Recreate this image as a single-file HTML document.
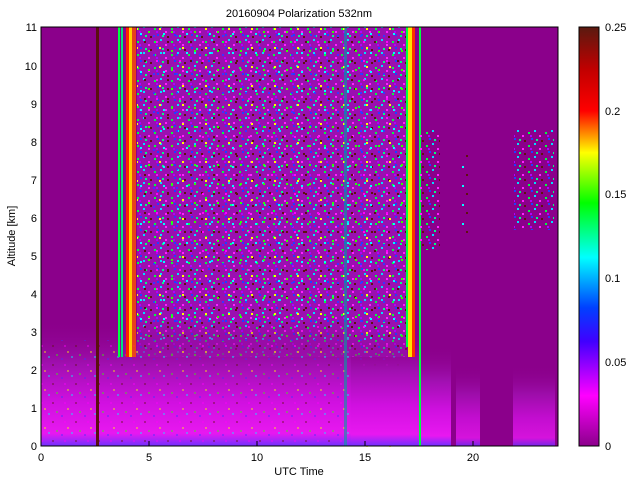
<!DOCTYPE html>
<html><head><style>
html,body{margin:0;padding:0;background:#fff;width:640px;height:480px;overflow:hidden}
svg{display:block}
text{font-family:"Liberation Sans",sans-serif;font-size:11px;fill:#000}
</style></head><body>
<svg width="640" height="480" xmlns="http://www.w3.org/2000/svg">
<defs>
<linearGradient id="cb" x1="0" y1="1" x2="0" y2="0">
<stop offset="0" stop-color="#8b008b"/>
<stop offset="0.12" stop-color="#ff00ff"/>
<stop offset="0.25" stop-color="#4000ff"/>
<stop offset="0.33" stop-color="#0040ff"/>
<stop offset="0.45" stop-color="#00ffff"/>
<stop offset="0.58" stop-color="#00ff00"/>
<stop offset="0.7" stop-color="#ffff00"/>
<stop offset="0.8" stop-color="#ff0000"/>
<stop offset="0.9" stop-color="#c00000"/>
<stop offset="1" stop-color="#5a1a10"/>
</linearGradient>
<linearGradient id="low" x1="0" y1="0" x2="0" y2="1">
<stop offset="0" stop-color="#8b008b" stop-opacity="0"/>
<stop offset="0.35" stop-color="#a010b0"/>
<stop offset="0.65" stop-color="#d010e0"/>
<stop offset="0.9" stop-color="#e818f0"/>
<stop offset="1" stop-color="#7030ff"/>
</linearGradient>
<pattern id="p1" width="17" height="13" patternUnits="userSpaceOnUse">
<rect x="1" y="2" width="2" height="2" fill="#00ff40"/>
<rect x="7" y="0" width="2" height="2" fill="#00e0ff"/>
<rect x="12" y="5" width="2" height="2" fill="#ff20ff"/>
<rect x="4" y="8" width="2" height="2" fill="#2040ff"/>
<rect x="14" y="10" width="2" height="2" fill="#601010"/>
<rect x="9" y="9" width="2" height="2" fill="#00ff80"/>
<rect x="3" y="5" width="2" height="2" fill="#b000ff"/>
</pattern>
<pattern id="p2" width="23" height="19" patternUnits="userSpaceOnUse">
<rect x="2" y="14" width="2" height="2" fill="#00ffff"/>
<rect x="18" y="3" width="2" height="2" fill="#ff00ff"/>
<rect x="10" y="12" width="2" height="2" fill="#30ff00"/>
<rect x="6" y="3" width="2" height="2" fill="#601010"/>
<rect x="15" y="16" width="2" height="2" fill="#4030ff"/>
<rect x="21" y="9" width="2" height="2" fill="#ffff00"/>
</pattern>
</defs>
<rect x="41" y="27" width="517" height="419" fill="#8b008b"/>
<rect x="137" y="27" width="270" height="330" fill="#9a10b0"/>
<rect x="137" y="27" width="270" height="330" fill="url(#p1)"/>
<rect x="137" y="27" width="270" height="330" fill="url(#p2)"/>
<rect x="355" y="27" width="50" height="420" fill="url(#p2)" opacity="0.6"/>
<rect x="41" y="320" width="310" height="126" fill="url(#low)"/>
<rect x="351" y="330" width="70" height="116" fill="url(#low)"/>
<rect x="421" y="345" width="30" height="101" fill="url(#low)"/>
<rect x="456" y="365" width="24" height="81" fill="url(#low)" opacity="0.8"/>
<rect x="513" y="365" width="42" height="81" fill="url(#low)" opacity="0.8"/>
<rect x="41" y="340" width="310" height="106" fill="url(#p2)" opacity="0.4"/>
<rect x="96" y="27" width="3" height="419" fill="#5a1010"/>
<rect x="118" y="27" width="2" height="330" fill="#00ff40"/>
<rect x="121" y="27" width="2" height="330" fill="#00e080"/>
<rect x="126" y="27" width="3" height="330" fill="#ff2000"/>
<rect x="129" y="27" width="3" height="330" fill="#ffd000"/>
<rect x="132" y="27" width="4" height="330" fill="#ff5000" opacity="0.8"/>
<rect x="344" y="27" width="3" height="419" fill="#00a0a0" opacity="0.6"/>
<rect x="406" y="27" width="2" height="320" fill="#00ff40"/>
<rect x="408" y="27" width="4" height="330" fill="#ffe000"/>
<rect x="412" y="27" width="3" height="330" fill="#ff3000"/>
<rect x="419" y="27" width="2" height="419" fill="#00ff40"/>
<rect x="420" y="130" width="20" height="120" fill="url(#p1)"/>
<rect x="462" y="150" width="6" height="90" fill="url(#p2)"/>
<rect x="514" y="130" width="40" height="100" fill="url(#p1)"/>
<rect x="41" y="27" width="517" height="419" fill="none" stroke="#000" stroke-width="1"/>
<g stroke="#000" stroke-width="1">
<line x1="149" y1="446" x2="149" y2="441"/><line x1="257" y1="446" x2="257" y2="441"/>
<line x1="365" y1="446" x2="365" y2="441"/><line x1="473" y1="446" x2="473" y2="441"/>
</g>
<g text-anchor="middle">
<text x="41" y="461">0</text><text x="149" y="461">5</text><text x="257" y="461">10</text>
<text x="365" y="461">15</text><text x="473" y="461">20</text>
<text x="299" y="475">UTC Time</text>
<text x="299" y="17">20160904 Polarization 532nm</text>
</g>
<g text-anchor="end">
<text x="37" y="450">0</text><text x="37" y="412">1</text><text x="37" y="374">2</text>
<text x="37" y="336">3</text><text x="37" y="298">4</text><text x="37" y="260">5</text>
<text x="37" y="222">6</text><text x="37" y="184">7</text><text x="37" y="146">8</text>
<text x="37" y="108">9</text><text x="37" y="70">10</text><text x="37" y="31">11</text>
</g>
<text x="15" y="236" text-anchor="middle" transform="rotate(-90 15 236)">Altitude [km]</text>
<rect x="579" y="27" width="20" height="419" fill="url(#cb)" stroke="#000"/>
<text x="605" y="450">0</text><text x="605" y="366">0.05</text><text x="605" y="282">0.1</text>
<text x="605" y="198">0.15</text><text x="605" y="115">0.2</text><text x="605" y="31">0.25</text>
</svg>
</body></html>
